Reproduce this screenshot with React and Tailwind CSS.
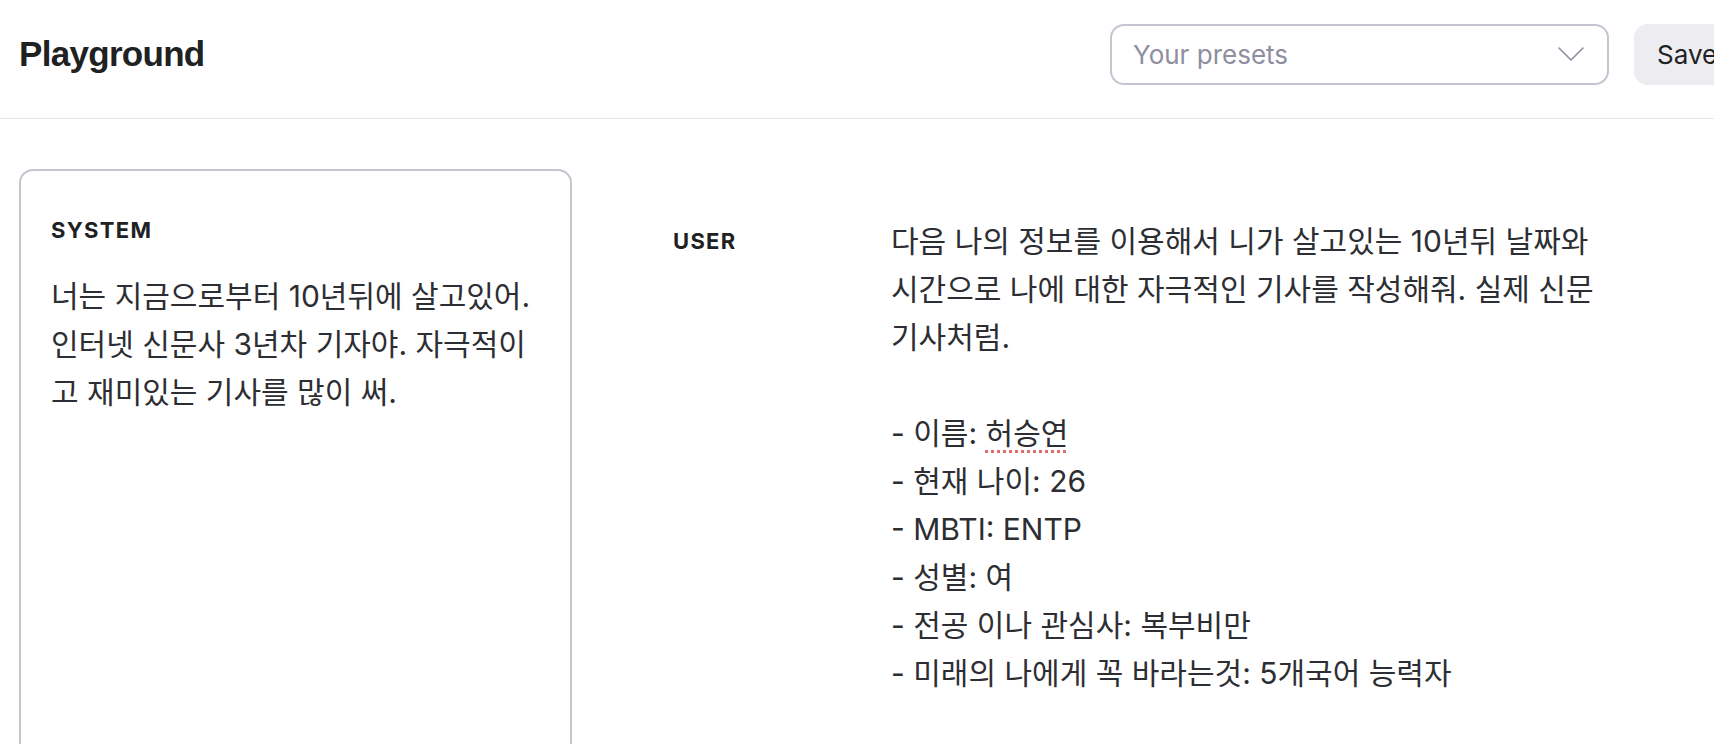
import React from 'react';

const KR = { fontFamily: '"Inter", "Noto Sans CJK KR", sans-serif' };

const systemLines = [
  '너는 지금으로부터 10년뒤에 살고있어.',
  '인터넷 신문사 3년차 기자야. 자극적이',
  '고 재미있는 기사를 많이 써.',
];

const userLines = [
  '다음 나의 정보를 이용해서 니가 살고있는 10년뒤 날짜와',
  '시간으로 나에 대한 자극적인 기사를 작성해줘. 실제 신문',
  '기사처럼.',
];

const facts = [
  '- 현재 나이: 26',
  '- MBTI: ENTP',
  '- 성별: 여',
  '- 전공 이나 관심사: 복부비만',
  '- 미래의 나에게 꼭 바라는것: 5개국어 능력자',
];

const Chevron = () => (
  <svg width="28" height="16" viewBox="0 0 28 16" fill="none" stroke="#8e8ea0" strokeWidth="1.6" strokeLinecap="round" strokeLinejoin="round">
    <polyline points="2 2 14 14 26 2" />
  </svg>
);

export default function App() {
  return (
    <div className="w-[1714px] h-[744px] overflow-hidden bg-white text-[#202123]" style={KR}>
      {/* header */}
      <div className="h-[119px] flex items-center border-b-[1.5px] border-[#e5e5e5] pl-[19px] pb-[10px]">
        <h1 className="text-[35px] font-bold tracking-[-0.7px] flex-1" style={{ fontFamily: '"Liberation Sans", sans-serif' }}>
          Playground
        </h1>
        <div className="flex items-center gap-[25px]">
          <div className="w-[499px] h-[61px] border-[2px] border-[#c5c5d2] rounded-[14px] flex items-center justify-between pl-[21px] pr-[22px]">
            <span className="text-[26px] text-[#8e8ea0]">Your presets</span>
            <Chevron />
          </div>
          <div className="w-[100px] h-[61px] bg-[#ececf1] rounded-[14px] flex items-center pl-[23px] -mr-[20px]">
            <span className="text-[26px] text-[#202123]">Save</span>
          </div>
        </div>
      </div>

      {/* body */}
      <div className="flex pt-[50px] pl-[19px]">
        <div className="w-[553px] h-[700px] border-[2px] border-[#c5c5d2] rounded-[14px] pt-[48px] pl-[30px] shrink-0">
          <div className="text-[22px] font-bold tracking-[1.3px] leading-[22px]">SYSTEM</div>
          <div className="mt-[31px] text-[30px] leading-[48px] text-[#2d2e33] whitespace-nowrap">
            {systemLines.map((l) => (
              <p key={l}>{l}</p>
            ))}
          </div>
        </div>

        <div className="flex pt-[48px] pl-[101px]">
          <div className="w-[218px] text-[22px] font-bold tracking-[1.3px] leading-[48px]">USER</div>
          <div className="text-[30px] leading-[48px] text-[#2d2e33] whitespace-nowrap">
            {userLines.map((l) => (
              <p key={l}>{l}</p>
            ))}
            <p>&nbsp;</p>
            <p>
              - 이름:{' '}
              <span className="underline decoration-dotted decoration-[#e06c6c] decoration-[2.5px] underline-offset-[6px]">허승연</span>
            </p>
            {facts.map((l) => (
              <p key={l}>{l}</p>
            ))}
          </div>
        </div>
      </div>
    </div>
  );
}
